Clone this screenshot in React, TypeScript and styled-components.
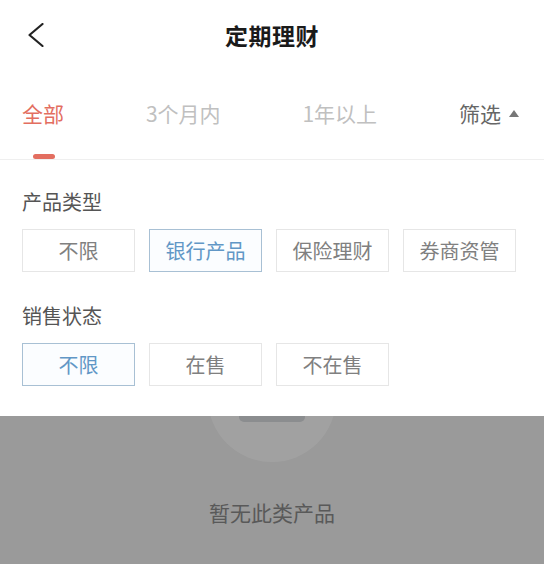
import styled, { createGlobalStyle } from "styled-components";
import { useState } from "react";

const GlobalStyle = createGlobalStyle`
  html, body {
    margin: 0;
    padding: 0;
    background: #fff;
    font-family: "Noto Sans CJK SC", "Noto Sans", sans-serif;
  }
  * { box-sizing: border-box; }
`;

const TABS = ["全部", "3个月内", "1年以上"];
const PRODUCT_TYPES = ["不限", "银行产品", "保险理财", "券商资管"];
const SALE_STATES = ["不限", "在售", "不在售"];

export default function App() {
  const [tab, setTab] = useState(0);
  const [productType, setProductType] = useState(1);
  const [saleState, setSaleState] = useState(0);

  return (
    <Page>
      <GlobalStyle />
      <NavBar>
        <BackButton aria-label="返回">
          <svg width="16" height="24" viewBox="0 0 16 24" fill="none">
            <polyline points="14.5,1 1.5,12 14.5,23" stroke="#222" strokeWidth="2.2" strokeLinecap="round" strokeLinejoin="round" />
          </svg>
        </BackButton>
        <Title>定期理财</Title>
        <span />
      </NavBar>

      <Tabs>
        {TABS.map((t, i) => (
          <Tab key={t} $active={i === tab} onClick={() => setTab(i)}>{t}</Tab>
        ))}
        <FilterToggle>
          筛选
          <svg width="10" height="7" viewBox="0 0 10 7">
            <polygon points="5,0 10,7 0,7" fill="#777" />
          </svg>
        </FilterToggle>
      </Tabs>

      <Body>
        <EmptyState>
          <EmptyIcon>
            <EmptyBox />
          </EmptyIcon>
          <EmptyText>暂无此类产品</EmptyText>
        </EmptyState>
        <Mask />
        <FilterPanel>
          <GroupLabel>产品类型</GroupLabel>
          <OptionGrid>
            {PRODUCT_TYPES.map((o, i) => (
              <Option key={o} $selected={i === productType} onClick={() => setProductType(i)}>{o}</Option>
            ))}
          </OptionGrid>
          <GroupLabel $spaced>销售状态</GroupLabel>
          <OptionGrid>
            {SALE_STATES.map((o, i) => (
              <Option key={o} $selected={i === saleState} onClick={() => setSaleState(i)}>{o}</Option>
            ))}
          </OptionGrid>
        </FilterPanel>
      </Body>
    </Page>
  );
}

const Page = styled.div`
  width: 100%;
  height: 100vh;
  display: flex;
  flex-direction: column;
  overflow: hidden;
  background: #fff;
`;

const NavBar = styled.div`
  height: 70px;
  display: grid;
  grid-template-columns: 1fr auto 1fr;
  align-items: center;
  padding: 0 28px;
`;

const BackButton = styled.button`
  justify-self: start;
  background: none;
  border: none;
  padding: 0;
  display: flex;
  cursor: pointer;
`;

const Title = styled.div`
  font-size: 23px;
  font-weight: 700;
  color: #1a1a1a;
  letter-spacing: 0.5px;
`;

const Tabs = styled.div`
  display: flex;
  justify-content: space-between;
  align-items: flex-start;
  height: 90px;
  padding: 28px 25px 0 22px;
  border-bottom: 1px solid #efefef;
`;

const Tab = styled.div<{ $active?: boolean }>`
  position: relative;
  font-size: 21px;
  line-height: 30px;
  color: ${(p) => (p.$active ? "#e36e60" : "#c0c0c0")};
  cursor: pointer;

  &::after {
    content: "";
    display: ${(p) => (p.$active ? "block" : "none")};
    position: absolute;
    left: 50%;
    top: 56px;
    width: 22px;
    height: 5px;
    margin-left: -10px;
    border-radius: 3px;
    background: #e36e60;
  }
`;

const FilterToggle = styled.div`
  display: flex;
  align-items: center;
  gap: 8px;
  font-size: 21px;
  line-height: 30px;
  color: #666;
  cursor: pointer;
`;

const Body = styled.div`
  position: relative;
  flex: 1;
  background: #f0f0f0;
`;

const EmptyState = styled.div`
  display: flex;
  flex-direction: column;
  align-items: center;
  padding-top: 174px;
`;

const EmptyIcon = styled.div`
  width: 128px;
  height: 128px;
  border-radius: 50%;
  background: #fff;
  display: flex;
  justify-content: center;
  padding-top: 80px;
`;

const EmptyBox = styled.div`
  width: 66px;
  height: 8px;
  border-radius: 0 0 5px 5px;
  background: #d2d6da;
`;

const EmptyText = styled.div`
  margin-top: 36px;
  font-size: 21px;
  line-height: 28px;
  color: #6e6e6e;
`;

const Mask = styled.div`
  position: absolute;
  inset: 0;
  background: rgba(68, 68, 68, 0.5);
`;

const FilterPanel = styled.div`
  position: absolute;
  top: 0;
  left: 0;
  right: 0;
  background: #fff;
  padding: 28px 22px 30px;
`;

const GroupLabel = styled.div<{ $spaced?: boolean }>`
  font-size: 20px;
  line-height: 28px;
  color: #555;
  margin-top: ${(p) => (p.$spaced ? "30px" : "0")};
  margin-bottom: 13px;
`;

const OptionGrid = styled.div`
  display: grid;
  grid-template-columns: repeat(4, 113px);
  column-gap: 14px;
`;

const Option = styled.div<{ $selected?: boolean }>`
  height: 43px;
  display: flex;
  align-items: center;
  justify-content: center;
  font-size: 20px;
  color: ${(p) => (p.$selected ? "#6197c6" : "#808080")};
  border: 1.5px solid ${(p) => (p.$selected ? "#a8c0d4" : "#e6e6e6")};
  background: ${(p) => (p.$selected ? "#fbfdff" : "#fff")};
  cursor: pointer;
`;
